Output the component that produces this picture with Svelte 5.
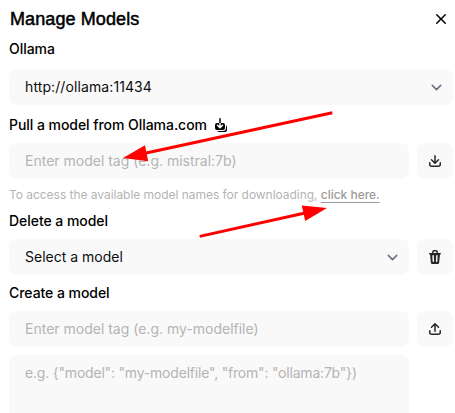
<script>
  const tray =
    'M3.5 9.75a.75.75 0 0 0-1.5 0v1.5A2.75 2.75 0 0 0 4.75 14h6.5A2.75 2.75 0 0 0 14 11.25v-1.5a.75.75 0 0 0-1.5 0v1.5c0 .69-.56 1.25-1.25 1.25h-6.5c-.69 0-1.25-.56-1.25-1.25v-1.5Z';
</script>

{#snippet chevron()}
  <svg class="chevron" viewBox="0 0 20 20" fill="none" stroke="#6b7280" stroke-width="1.5" stroke-linecap="round" stroke-linejoin="round"><path d="M6 8l4 4 4-4" /></svg>
{/snippet}

<div class="modal">
  <header>
    <h1>Manage Models</h1>
    <button class="close" aria-label="Close">
      <svg width="20" height="20" viewBox="0 0 20 20" fill="currentColor"><path d="M6.28 5.22a.75.75 0 00-1.06 1.06L8.94 10l-3.72 3.72a.75.75 0 101.06 1.06L10 11.06l3.72 3.72a.75.75 0 101.06-1.06L11.06 10l3.72-3.72a.75.75 0 00-1.06-1.06L10 8.94 6.28 5.22z" /></svg>
    </button>
  </header>

  <section>
    <h2>Ollama</h2>
    <div class="row first"><div class="field url">http://ollama:11434{@render chevron()}</div></div>
  </section>

  <section class="pull">
    <h2>
      Pull a model from Ollama.com
      <svg class="update" width="16" height="16" viewBox="0 0 16 16" fill="currentColor">
        <path d="M7 1a.75.75 0 0 1 .75.75V6h-1.5V1.75A.75.75 0 0 1 7 1ZM6.25 6v2.94L5.03 7.72a.75.75 0 0 0-1.06 1.06l2.5 2.5a.75.75 0 0 0 1.06 0l2.5-2.5a.75.75 0 1 0-1.06-1.06L7.75 8.94V6H10a2 2 0 0 1 2 2v3a2 2 0 0 1-2 2H4a2 2 0 0 1-2-2V8a2 2 0 0 1 2-2h2.25Z" />
        <path d="M4.268 14A2 2 0 0 0 6 15h6a2 2 0 0 0 2-2v-3a2 2 0 0 0-1-1.732V11a3 3 0 0 1-3 3H4.268Z" />
      </svg>
    </h2>
    <div class="row">
      <div class="field hint">Enter model tag (e.g. mistral:7b)</div>
      <button class="action" aria-label="Download">
        <svg width="16" height="16" viewBox="0 0 16 16" fill="currentColor"><path d="M8.75 2.75a.75.75 0 0 0-1.5 0v5.69L5.03 6.22a.75.75 0 0 0-1.06 1.06l3.5 3.5a.75.75 0 0 0 1.06 0l3.5-3.5a.75.75 0 0 0-1.06-1.06L8.75 8.44V2.75Z" /><path d={tray} /></svg>
      </button>
    </div>
    <p>To access the available model names for downloading, <span class="link">click here.</span></p>
  </section>

  <section>
    <h2>Delete a model</h2>
    <div class="row">
      <div class="field">Select a model{@render chevron()}</div>
      <button class="action" aria-label="Delete">
        <svg width="16" height="16" viewBox="0 0 16 16" fill="currentColor"><path fill-rule="evenodd" clip-rule="evenodd" d="M5 3.25V4H2.75a.75.75 0 0 0 0 1.5h.3l.815 8.15A1.5 1.5 0 0 0 5.357 15h5.285a1.5 1.5 0 0 0 1.493-1.35l.815-8.15h.3a.75.75 0 0 0 0-1.5H11v-.75A2.25 2.25 0 0 0 8.75 1h-1.5A2.25 2.25 0 0 0 5 3.25Zm2.25-.75a.75.75 0 0 0-.75.75V4h3v-.75a.75.75 0 0 0-.75-.75h-1.5ZM6.05 6a.75.75 0 0 1 .787.713l.275 5.5a.75.75 0 0 1-1.498.075l-.275-5.5A.75.75 0 0 1 6.05 6Zm3.9 0a.75.75 0 0 1 .712.787l-.275 5.5a.75.75 0 0 1-1.498-.075l.275-5.5a.75.75 0 0 1 .786-.711Z" /></svg>
      </button>
    </div>
  </section>

  <section class="create">
    <h2>Create a model</h2>
    <div class="row">
      <div class="stack">
        <div class="field hint">Enter model tag (e.g. my-modelfile)</div>
        <div class="field area hint">{'e.g. {"model": "my-modelfile", "from": "ollama:7b"})'}</div>
      </div>
      <button class="action" aria-label="Upload">
        <svg width="16" height="16" viewBox="0 0 16 16" fill="currentColor"><path d="M7.25 10.25a.75.75 0 0 0 1.5 0V4.56l2.22 2.22a.75.75 0 1 0 1.06-1.06l-3.5-3.5a.75.75 0 0 0-1.06 0l-3.5 3.5a.75.75 0 0 0 1.06 1.06l2.22-2.22v5.69Z" /><path d={tray} /></svg>
      </button>
    </div>
  </section>

  <svg class="arrows" width="455" height="413" viewBox="0 0 455 413" fill="#f00" stroke="#f00">
    <path d="M332.3 112.7L145 153.2M199.7 236.4L305 213" stroke-width="3" />
    <path stroke="none" d="M123 158L145 145.3L148.2 161.3ZM327 208L301.8 205.4L305.2 221Z" />
  </svg>
</div>

<style>
  :global(body) { margin: 0; background: #fff; }
  .modal {
    position: relative;
    box-sizing: border-box;
    width: 455px;
    height: 413px;
    overflow: hidden;
    padding: 5px 2px 0 9px;
    background: #fff;
    color: #000;
    font: 14px/20px Inter, sans-serif;
  }
  header { display: flex; justify-content: space-between; align-items: center; height: 28px; padding: 0 2px 0 1px; }
  h1 { margin: 0; font: 400 18px/28px "Liberation Sans", Arial, sans-serif; letter-spacing: 0.1px; -webkit-text-stroke: 0.5px #000; }
  h2 { display: flex; align-items: center; margin: 0; font-size: 14px; line-height: 20px; font-weight: 500; letter-spacing: -0.05px; }
  section { padding-top: 6px; }
  section + section { padding-top: 10px; }
  .pull + section, section.create { padding-top: 8px; }
  button { border: 0; padding: 0; background: none; color: #000; }
  .close { display: flex; }
  .update { margin-left: 6px; }
  .row { display: flex; align-items: flex-start; gap: 8px; margin-top: 8px; }
  .first { margin-top: 10px; }
  .field {
    display: flex;
    flex: 1;
    box-sizing: border-box;
    height: 36px;
    padding: 8px 6px 8px 16px;
    border-radius: 8px;
    background: #f9f9f9;
    color: #0d0d0d;
    justify-content: space-between;
    align-items: center;
    white-space: pre;
  }
  .url { letter-spacing: 0.1px; }
  .hint { color: #b4b4b4; }
  .chevron { width: 21px; height: 21px; }
  .action {
    display: flex;
    align-items: center;
    justify-content: center;
    width: 36px;
    height: 36px;
    border-radius: 8px;
    background: #f9f9f9;
    color: #262626;
  }
  .stack { display: flex; flex: 1; flex-direction: column; gap: 8px; }
  .stack .field { flex: none; }
  .stack .area { height: 100px; align-items: flex-start; letter-spacing: -0.2px; }
  p { margin: 8px 0 0; font-size: 12px; line-height: 16px; color: #b4b4b4; white-space: nowrap; letter-spacing: -0.035px; }
  .link { color: #9b9b9b; font-weight: 500; text-decoration: underline; text-underline-offset: 3px; }
  .arrows { position: absolute; left: 0; top: 0; }
</style>
